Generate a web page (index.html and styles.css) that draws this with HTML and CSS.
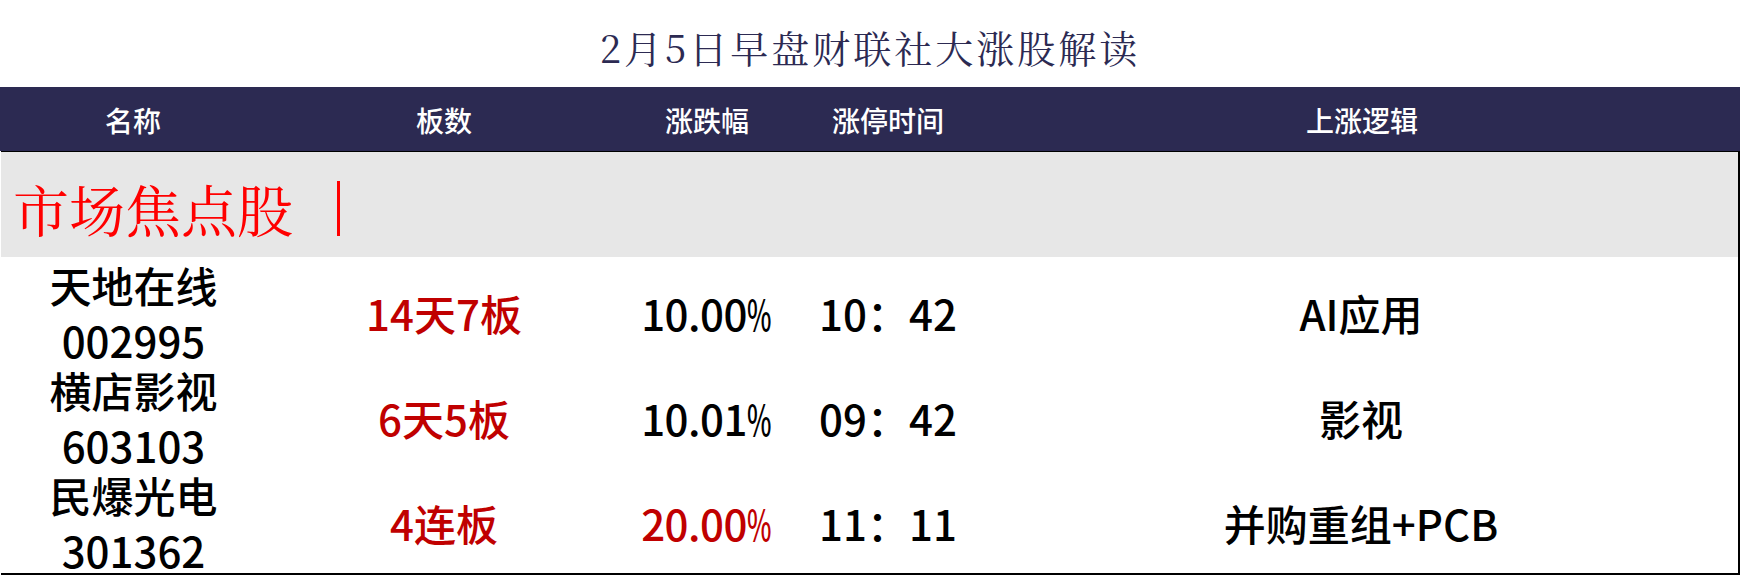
FILE: index.html
```html
<!DOCTYPE html>
<html lang="zh">
<head>
<meta charset="utf-8">
<title>2月5日早盘财联社大涨股解读</title>
<link rel="stylesheet" href="styles.css">
</head>
<body>
<div class="page">
  <h1 class="title">2月5日早盘财联社大涨股解读</h1>
  <div class="thead">
    <div class="th">名称</div>
    <div class="th">板数</div>
    <div class="th">涨跌幅</div>
    <div class="th">涨停时间</div>
    <div class="th">上涨逻辑</div>
  </div>
  <div class="tbody">
    <div class="section">
      <span class="section-text">市场焦点股</span><span class="section-bar"></span>
    </div>
    <div class="row">
      <div class="cell name"><span class="line">天地在线</span><span class="line">002995</span></div>
      <div class="cell red">14天7板</div>
      <div class="cell pct">10.00<span class="pc">%</span></div>
      <div class="cell">10：42</div>
      <div class="cell">AI应用</div>
    </div>
    <div class="row">
      <div class="cell name"><span class="line">横店影视</span><span class="line">603103</span></div>
      <div class="cell red">6天5板</div>
      <div class="cell pct">10.01<span class="pc">%</span></div>
      <div class="cell">09：42</div>
      <div class="cell">影视</div>
    </div>
    <div class="row">
      <div class="cell name"><span class="line">民爆光电</span><span class="line">301362</span></div>
      <div class="cell red">4连板</div>
      <div class="cell pct red">20.00<span class="pc">%</span></div>
      <div class="cell">11：11</div>
      <div class="cell">并购重组+PCB</div>
    </div>
  </div>
</div>
</body>
</html>
```
FILE: styles.css
```css
html, body {
  margin: 0;
  padding: 0;
  background: #ffffff;
}
.page {
  width: 1740px;
  height: 576px;
  overflow: hidden;
  font-family: "Noto Sans CJK SC", "Liberation Sans", sans-serif;
}
.title {
  margin: 0;
  height: 87px;
  box-sizing: border-box;
  padding-top: 6px;
  display: flex;
  align-items: center;
  justify-content: center;
  font-family: "Noto Serif CJK SC", "Liberation Serif", serif;
  font-weight: 400;
  font-size: 38px;
  letter-spacing: 3px;
  color: #2c2a52;
}
.thead {
  height: 64px;
  background: #2c2a52;
  display: grid;
  grid-template-columns: 266px 356px 170px 192px 1fr;
  align-items: center;
  padding-top: 2px;
  box-sizing: border-box;
}
.th {
  text-align: center;
  color: #ffffff;
  font-size: 28px;
  font-weight: 500;
  line-height: 1;
}
.tbody {
  margin-left: 1px;
  border-top: 1px solid #000;
  border-right: 2px solid #000;
  border-bottom: 2px solid #000;
  height: 424px;
  box-sizing: border-box;
}
.section {
  height: 105px;
  background: #e7e7e7;
  display: flex;
  align-items: center;
  padding: 7px 0 0 12px;
  box-sizing: border-box;
}
.section-text {
  font-family: "Noto Serif CJK SC", "Liberation Serif", serif;
  font-size: 56px;
  line-height: 1;
  color: #ff0000;
}
.section-bar {
  width: 3px;
  height: 55px;
  background: #ff0000;
  margin-left: 44px;
}
.row {
  height: 105px;
  display: grid;
  grid-template-columns: 265px 356px 170px 192px 1fr;
  align-items: center;
  padding-top: 6px;
  box-sizing: border-box;
}
.cell {
  text-align: center;
  font-size: 42px;
  font-weight: 500;
  line-height: 1;
  color: #000000;
  white-space: nowrap;
}
.cell.name {
  display: flex;
  flex-direction: column;
  align-items: center;
  gap: 11px;
}
.cell.name .line {
  display: block;
  line-height: 44px;
}
.cell.pct {
  letter-spacing: -0.5px;
}
.pc {
  display: inline-block;
  transform: scaleX(0.62);
  transform-origin: left center;
  margin-right: -13px;
}
.cell.red {
  color: #c00000;
}
```
